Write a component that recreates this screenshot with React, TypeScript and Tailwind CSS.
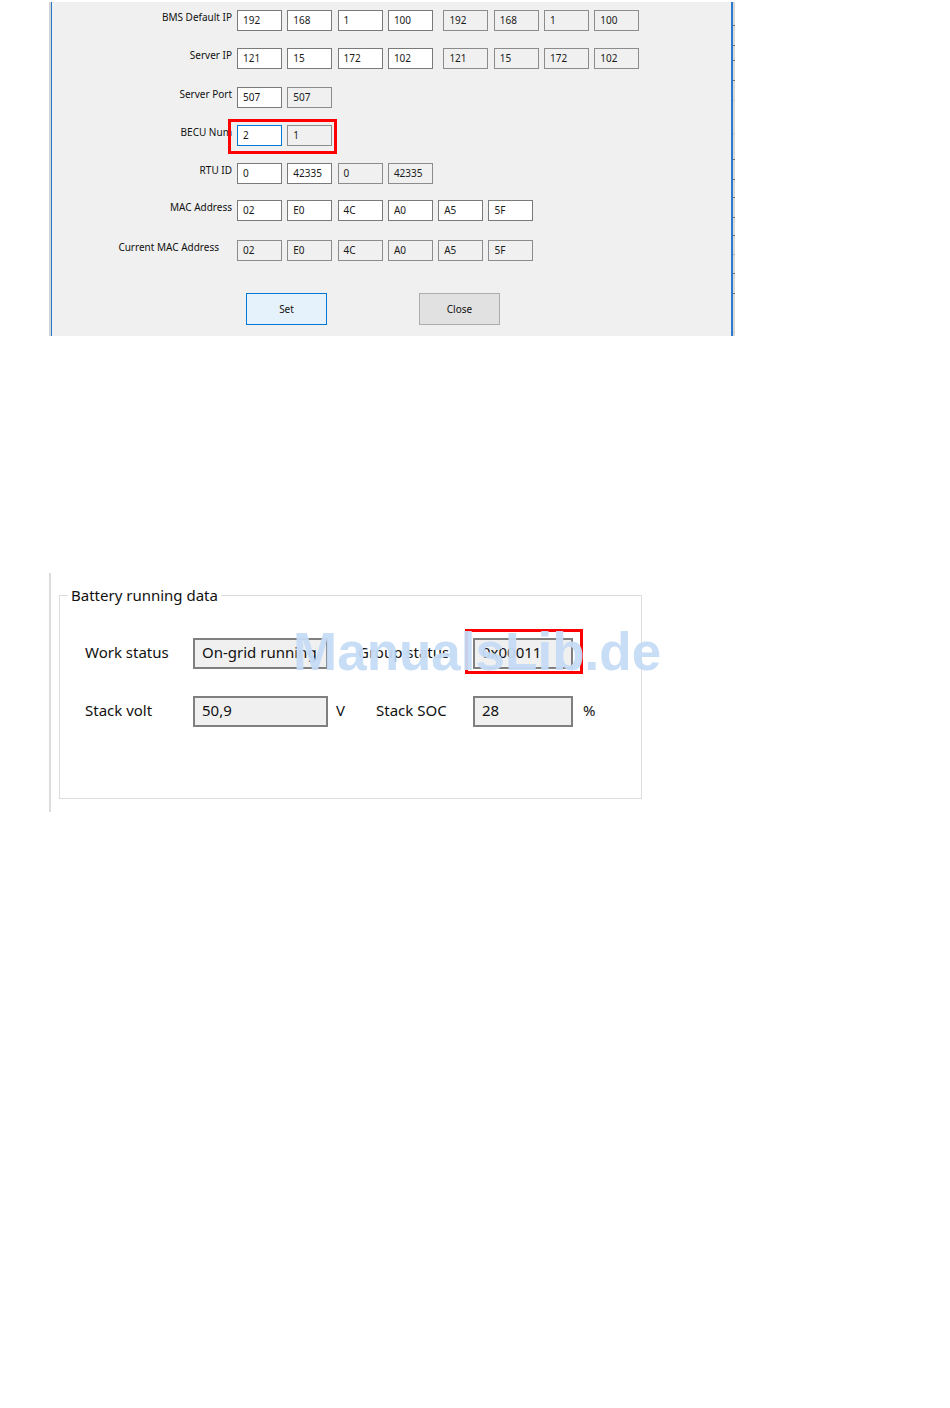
import React from 'react';

type Cell = { v: string; edit?: boolean; focus?: boolean };

const ROWS: { label: string; mt: string; pr?: string; groups: Cell[][] }[] = [
  {
    label: 'BMS Default IP',
    mt: 'mt-[8px]',
    groups: [
      [{ v: '192', edit: true }, { v: '168', edit: true }, { v: '1', edit: true }, { v: '100', edit: true }],
      [{ v: '192' }, { v: '168' }, { v: '1' }, { v: '100' }],
    ],
  },
  {
    label: 'Server IP',
    mt: 'mt-[17px]',
    groups: [
      [{ v: '121', edit: true }, { v: '15', edit: true }, { v: '172', edit: true }, { v: '102', edit: true }],
      [{ v: '121' }, { v: '15' }, { v: '172' }, { v: '102' }],
    ],
  },
  {
    label: 'Server Port',
    mt: 'mt-[18px]',
    groups: [[{ v: '507', edit: true }, { v: '507' }]],
  },
  {
    label: 'BECU Num',
    mt: 'mt-[17px]',
    groups: [[{ v: '2', edit: true, focus: true }, { v: '1' }]],
  },
  {
    label: 'RTU ID',
    mt: 'mt-[17px]',
    groups: [[{ v: '0', edit: true }, { v: '42335', edit: true }, { v: '0' }, { v: '42335' }]],
  },
  {
    label: 'MAC Address',
    mt: 'mt-[16px]',
    groups: [
      [
        { v: '02', edit: true },
        { v: 'E0', edit: true },
        { v: '4C', edit: true },
        { v: 'A0', edit: true },
        { v: 'A5', edit: true },
        { v: '5F', edit: true },
      ],
    ],
  },
  {
    label: 'Current MAC Address',
    mt: 'mt-[19px]',
    pr: 'pr-[13px]',
    groups: [[{ v: '02' }, { v: 'E0' }, { v: '4C' }, { v: 'A0' }, { v: 'A5' }, { v: '5F' }]],
  },
];

const TICKS = [
  [25, '#6e6e6e'], [45, '#6e6e6e'], [60, '#6e6e6e'], [80, '#6e6e6e'], [100, '#c8c8c8'],
  [133, '#c8c8c8'], [159, '#6e6e6e'], [179, '#6e6e6e'], [197, '#6e6e6e'], [217, '#6e6e6e'],
  [235, '#6e6e6e'], [254, '#b4b4b4'], [273, '#6e6e6e'], [293, '#6e6e6e'], [332, '#c8c8c8'],
];

const Box = ({ cell }: { cell: Cell }) => (
  <div
    className={`w-[45px] h-[21px] border flex items-center pl-[5px] pb-[2px] text-[10px] leading-none text-[#1a1a1a] ${
      cell.focus
        ? 'bg-white border-[#0078d7]'
        : cell.edit
        ? 'bg-white border-[#7a7a7a]'
        : 'bg-[#f0f0f0] border-[#8c8c8c]'
    }`}
  >
    {cell.v}
  </div>
);

const ReadBox = ({ value, w }: { value: string; w: string }) => (
  <div
    className={`${w} h-[31px] border-2 border-[#7f7f7f] bg-[#f0f0f0] flex items-center pl-[7px] pb-[2px] text-[15px] text-[#111]`}
  >
    {value}
  </div>
);

export default function App() {
  return (
    <div className="w-[950px] h-[1408px] bg-white font-['Noto_Sans',sans-serif] overflow-hidden">
      {/* settings dialog capture */}
      <div className="relative ml-[49px] mt-[2px] w-[686px] h-[334px] flex">
        <div className="w-[2px] h-full bg-[#d4d4d4]" />
        <div className="w-[1px] h-full bg-[#2a7ad0]" />
        <div className="flex-1 bg-[#f0f0f0] flex flex-col">
          {ROWS.map((row) => (
            <div key={row.label} className={`flex ${row.mt}`}>
              <div
                className={`w-[180px] text-right text-[10px] leading-[14px] text-[#111] ${row.pr ?? 'pr-0'} whitespace-nowrap`}
              >
                {row.label}
              </div>
              <div className="flex gap-[10.5px] ml-[5px]">
                {row.groups.map((g, gi) => (
                  <div key={gi} className="flex gap-[5.3px]">
                    {g.map((c, ci) => (
                      <Box key={ci} cell={c} />
                    ))}
                  </div>
                ))}
              </div>
            </div>
          ))}
          <div className="flex mt-[32px] ml-[194px] gap-[92px]">
            <button className="w-[81px] h-[32px] border border-[#0078d7] bg-[#e5f1fb] text-[10px] text-[#111]">
              Set
            </button>
            <button className="w-[81px] h-[32px] border border-[#adadad] bg-[#e1e1e1] text-[10px] text-[#111]">
              Close
            </button>
          </div>
        </div>
        <div className="w-[2px] h-full bg-[#2a7ad0]" />
        <svg width="2" height="334" className="block">
          <rect x="0" y="0" width="2" height="334" fill="#d8d8d8" />
          {TICKS.map(([y, c]) => (
            <rect key={y as number} x="0" y={(y as number) - 2} width="2" height="1" fill={c as string} />
          ))}
        </svg>
        <div className="absolute left-[179px] top-[117px] w-[109px] h-[35px] border-[3px] border-[#ff0000]" />
      </div>

      {/* battery running data capture */}
      <div className="relative ml-[49px] mt-[237px] w-[600px] h-[239px] pt-[22px] border-l-2 border-[#dcdcdc]">
        <div className="relative ml-[8px] w-[583px] h-[204px] border border-[#dcdcdc]">
          <div className="absolute left-[8px] -top-[11px] bg-white px-[3px] text-[15px] leading-[20px] text-[#111]">
            Battery running data
          </div>
          <div className="flex items-center mt-[42px] ml-[25px] text-[15px] text-[#111]">
            <div className="w-[108px] pb-[2px]">Work status</div>
            <ReadBox value="On-grid running" w="w-[135px]" />
            <div className="w-[115px] ml-[30px] pb-[2px]">Group status</div>
            <ReadBox value="0x00011" w="w-[100px]" />
          </div>
          <div className="flex items-center mt-[27px] ml-[25px] text-[15px] text-[#111]">
            <div className="w-[108px] pb-[2px]">Stack volt</div>
            <ReadBox value="50,9" w="w-[135px]" />
            <div className="w-[40px] ml-[8px] pb-[2px]">V</div>
            <div className="w-[97px] pb-[2px]">Stack SOC</div>
            <ReadBox value="28" w="w-[100px]" />
            <div className="ml-[10px] pb-[2px]">%</div>
          </div>
        </div>
        <div className="absolute left-[414px] top-[56px] w-[118px] h-[45px] border-[3px] border-[#ff0000]" />
        <div className="absolute left-[242px] top-[52px] text-[53px] leading-[53px] font-bold text-[#c6dcf6] opacity-95 font-['Liberation_Sans',Arial,sans-serif] whitespace-nowrap">
          ManualsLib.de
        </div>
      </div>
    </div>
  );
}
